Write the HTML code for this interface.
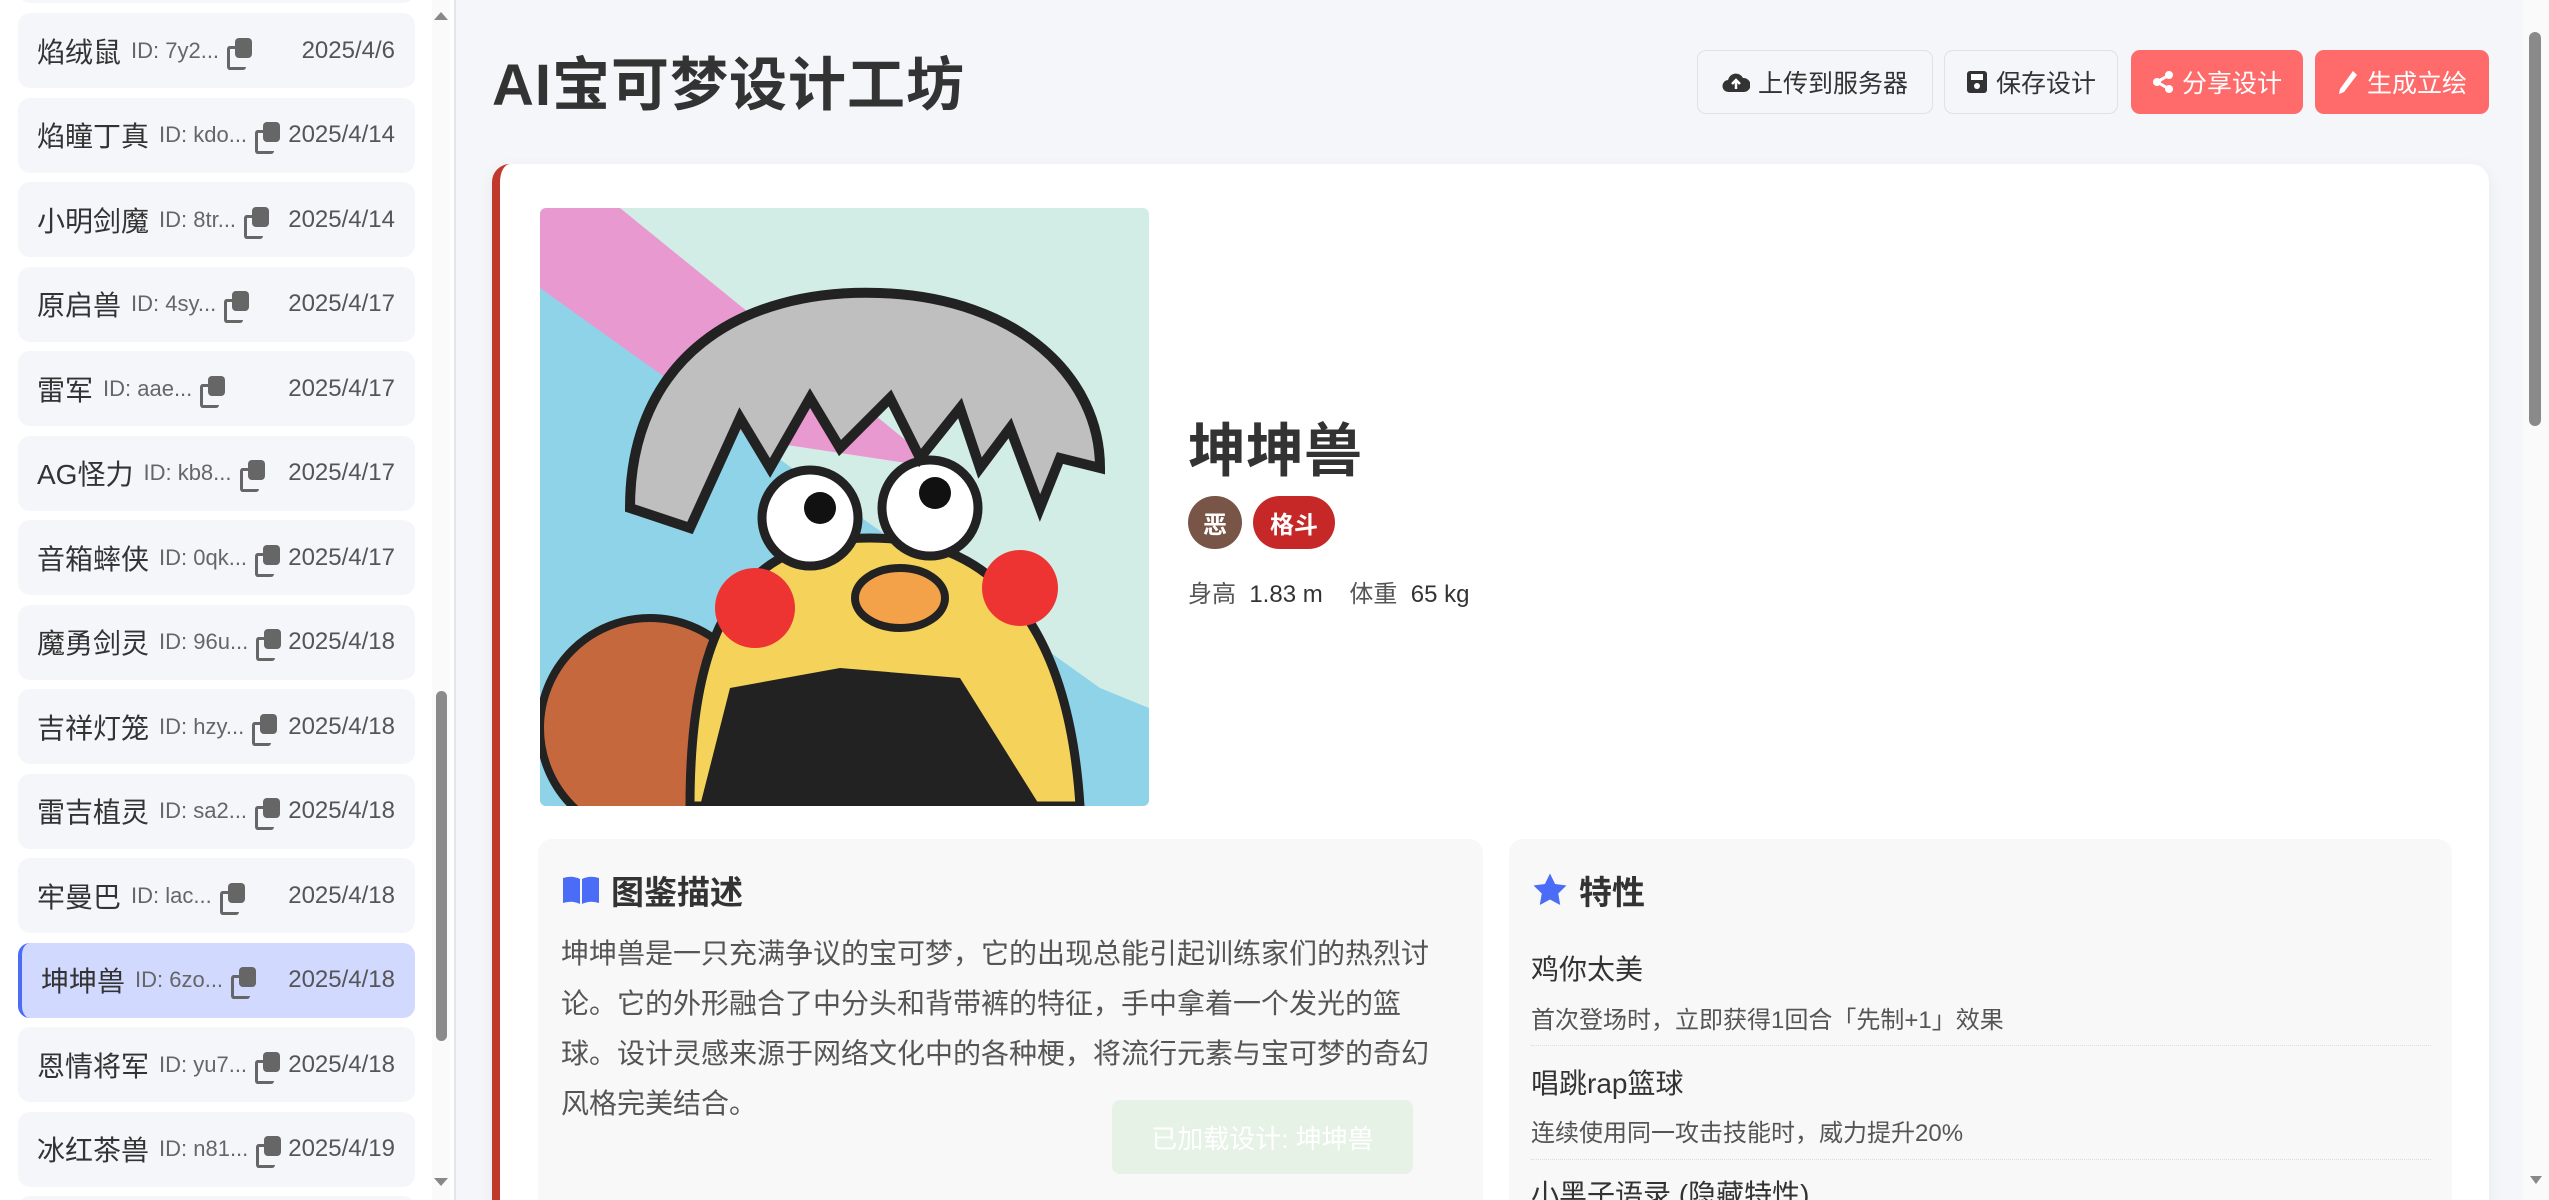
<!DOCTYPE html>
<html style="overflow:hidden;width:2549px;height:1200px"><head><meta charset="utf-8"><style>
*{box-sizing:border-box;margin:0;padding:0}
body{width:2549px;height:1200px;overflow:hidden;background:#f5f6fa;font-family:"Liberation Sans","Noto Sans CJK SC",sans-serif;position:relative;color:#333}
#side{position:absolute;left:0;top:0;width:456px;height:1200px;background:#fff;border-right:2px solid #e4e6ea;overflow:hidden}
.it{position:absolute;left:18px;width:397px;height:75px;background:#f5f6fa;border-radius:12px;display:flex;align-items:center;padding:0 20px 0 19px}
.it .n{font-size:28px;color:#333;white-space:nowrap}
.it .id{font-size:22px;color:#666;margin-left:10px;white-space:nowrap}
.it .cp{display:inline-block;width:26px;height:26px;position:relative;margin-left:8px}
.it .cp:before{content:"";position:absolute;left:0;top:8px;width:16px;height:18px;border:3px solid #666;border-right:none;border-radius:3px}
.it .cp:after{content:"";position:absolute;left:8px;top:0;width:17px;height:20px;background:#666;border-radius:4px}
.it .d{margin-left:auto;font-size:24px;color:#555;white-space:nowrap}
.it.act{background:#d1d9ff;border-left:4px solid #4a6cf7}
#sb{position:absolute;left:432px;top:0;width:18px;height:1200px;background:#fafafa}
#sb .th{position:absolute;left:4px;top:691px;width:11px;height:350px;background:#8a8a8a;border-radius:6px}
h1{position:absolute;left:492px;top:38px;font-size:58px;font-weight:bold;color:#333;letter-spacing:1px}
.btn{position:absolute;top:50px;height:64px;border-radius:9px;display:flex;align-items:center;justify-content:center;font-size:25px;gap:8px}
.bw{background:#f5f6fa;border:1.5px solid #dfe1e6;color:#333}
.br{background:#ff6b6b;color:#fff}
#card{position:absolute;left:492px;top:164px;width:1997px;height:1060px;background:#fff;border-radius:18px;border-left:8px solid #c0392b;box-shadow:0 4px 16px rgba(0,0,0,.06)}
#img{position:absolute;left:540px;top:208px;width:609px;height:598px;border-radius:6px;overflow:hidden}
.nm{position:absolute;left:1188px;top:404px;font-size:58px;font-weight:bold;color:#333}
.bd{position:absolute;top:496px;height:53px;border-radius:27px;color:#fff;font-size:24px;font-weight:bold;display:flex;align-items:center;justify-content:center}
.hw{position:absolute;left:1188px;top:574px;font-size:24px;color:#333}
.box{position:absolute;top:839px;height:400px;background:#f8f8f8;border-radius:14px}
.bt{position:absolute;top:866px;font-size:33px;font-weight:bold;color:#333;display:flex;align-items:center;gap:10px}
.desc{position:absolute;left:561px;top:929px;width:880px;font-size:28px;line-height:50px;color:#555}
.tn{position:absolute;left:1531px;font-size:28px;color:#333}
.td{position:absolute;left:1531px;font-size:24px;color:#555}
.hr{position:absolute;left:1531px;width:900px;border-top:1.5px dotted #ddd}
#toast{position:absolute;left:1112px;top:1100px;width:301px;height:74px;background:rgba(225,240,225,.75);border-radius:8px;color:#fff;font-size:26px;display:flex;align-items:center;justify-content:center}
#rsb{position:absolute;left:2523px;top:0;width:26px;height:1200px;background:#fafafa}
#rsb .th{position:absolute;left:6px;top:32px;width:12px;height:394px;background:#8a8a8a;border-radius:6px}
#clip{position:absolute;left:0;top:0;width:2549px;height:1200px;overflow:hidden}
</style></head><body><div id="clip">
<div id="side">
<div class="it" style="top:-72px"></div>
<div class="it" style="top:13px"><span class="n">焰绒鼠</span><span class="id">ID: 7y2...</span><span class="cp"></span><span class="d">2025/4/6</span></div>
<div class="it" style="top:97.5px"><span class="n">焰瞳丁真</span><span class="id">ID: kdo...</span><span class="cp"></span><span class="d">2025/4/14</span></div>
<div class="it" style="top:182px"><span class="n">小明剑魔</span><span class="id">ID: 8tr...</span><span class="cp"></span><span class="d">2025/4/14</span></div>
<div class="it" style="top:266.5px"><span class="n">原启兽</span><span class="id">ID: 4sy...</span><span class="cp"></span><span class="d">2025/4/17</span></div>
<div class="it" style="top:351px"><span class="n">雷军</span><span class="id">ID: aae...</span><span class="cp"></span><span class="d">2025/4/17</span></div>
<div class="it" style="top:435.5px"><span class="n">AG怪力</span><span class="id">ID: kb8...</span><span class="cp"></span><span class="d">2025/4/17</span></div>
<div class="it" style="top:520px"><span class="n">音箱蟀侠</span><span class="id">ID: 0qk...</span><span class="cp"></span><span class="d">2025/4/17</span></div>
<div class="it" style="top:604.5px"><span class="n">魔勇剑灵</span><span class="id">ID: 96u...</span><span class="cp"></span><span class="d">2025/4/18</span></div>
<div class="it" style="top:689px"><span class="n">吉祥灯笼</span><span class="id">ID: hzy...</span><span class="cp"></span><span class="d">2025/4/18</span></div>
<div class="it" style="top:773.5px"><span class="n">雷吉植灵</span><span class="id">ID: sa2...</span><span class="cp"></span><span class="d">2025/4/18</span></div>
<div class="it" style="top:858px"><span class="n">牢曼巴</span><span class="id">ID: lac...</span><span class="cp"></span><span class="d">2025/4/18</span></div>
<div class="it act" style="top:942.5px"><span class="n">坤坤兽</span><span class="id">ID: 6zo...</span><span class="cp"></span><span class="d">2025/4/18</span></div>
<div class="it" style="top:1027px"><span class="n">恩情将军</span><span class="id">ID: yu7...</span><span class="cp"></span><span class="d">2025/4/18</span></div>
<div class="it" style="top:1111.5px"><span class="n">冰红茶兽</span><span class="id">ID: n81...</span><span class="cp"></span><span class="d">2025/4/19</span></div>
<div class="it" style="top:1196px"></div>
<div id="sb"><svg width="18" height="1200" style="position:absolute;left:0;top:0"><path d="M2 20 L9 12 L16 20Z M2 1178 L9 1186 L16 1178Z" fill="#888"/></svg><div class="th"></div></div>
</div>
<h1>AI宝可梦设计工坊</h1>
<div class="btn bw" style="left:1697px;width:236px"><svg width="28" height="24" viewBox="0 0 28 24"><path d="M7 22a6 6 0 0 1-1-12 8 8 0 0 1 15-2 7 7 0 0 1 1 14z" fill="#333"/><path d="M14 19v-8M10 14l4-4 4 4" stroke="#fff" stroke-width="2.5" fill="none"/></svg>上传到服务器</div>
<div class="btn bw" style="left:1944px;width:174px"><svg width="22" height="24" viewBox="0 0 22 24"><rect x="1" y="1" width="20" height="22" rx="3" fill="#333"/><rect x="5" y="4" width="12" height="6" fill="#fff"/><circle cx="11" cy="16" r="3" fill="#fff"/></svg>保存设计</div>
<div class="btn br" style="left:2131px;width:172px"><svg width="22" height="24" viewBox="0 0 22 24"><circle cx="17" cy="5" r="4" fill="#fff"/><circle cx="5" cy="12" r="4" fill="#fff"/><circle cx="17" cy="19" r="4" fill="#fff"/><path d="M17 5L5 12L17 19" stroke="#fff" stroke-width="3" fill="none"/></svg>分享设计</div>
<div class="btn br" style="left:2315px;width:174px"><svg width="22" height="26" viewBox="0 0 22 26"><path d="M16 2l4 4L7 23l-5 2 1-5z" fill="#fff"/></svg>生成立绘</div>
<div id="card"></div>
<div id="img"><svg width="609" height="598" viewBox="0 0 609 598">
<rect width="609" height="598" fill="#d2ede6"/>
<path d="M0 0L80 0L400 260L0 200Z" fill="#e899cf"/>
<path d="M0 80L560 480L609 500L609 598L0 598Z" fill="#8fd3e8"/>
<circle cx="110" cy="520" r="110" fill="#c6683e" stroke="#222" stroke-width="8"/>
<path d="M150 598C150 420 200 330 330 330C470 330 530 440 540 598Z" fill="#f5d35a" stroke="#222" stroke-width="9"/>
<path d="M160 598L190 480L300 460L420 470L500 598Z" fill="#222"/>
<circle cx="270" cy="310" r="48" fill="#fff" stroke="#222" stroke-width="9"/>
<circle cx="390" cy="300" r="48" fill="#fff" stroke="#222" stroke-width="9"/>
<circle cx="280" cy="300" r="16" fill="#111"/><circle cx="395" cy="285" r="16" fill="#111"/>
<ellipse cx="360" cy="390" rx="45" ry="30" fill="#f4a24a" stroke="#222" stroke-width="8"/>
<circle cx="215" cy="400" r="40" fill="#e33"/><circle cx="480" cy="380" r="38" fill="#e33"/>
<path d="M90 300C90 150 200 80 340 85C480 90 560 170 560 260L520 250L500 300L470 220L440 260L420 200L380 250L350 190L300 240L270 190L230 260L200 210L150 320Z" fill="#bfbfbf" stroke="#222" stroke-width="10"/>
</svg></div>
<div class="nm">坤坤兽</div>
<div class="bd" style="left:1188px;width:54px;background:#795548">恶</div>
<div class="bd" style="left:1253px;width:82px;background:#c62828">格斗</div>
<div class="hw"><span style="color:#555">身高</span>&nbsp;&nbsp;1.83 m&nbsp;&nbsp;&nbsp;&nbsp;<span style="color:#555">体重</span>&nbsp;&nbsp;65 kg</div>
<div class="box" style="left:538px;width:945px"></div>
<div class="box" style="left:1509px;width:943px"></div>
<div class="bt" style="left:561px"><svg width="40" height="32" viewBox="0 0 40 32"><path d="M2 4q9-3 17 1v25q-8-4-17-1z M21 5q8-4 17-1v25q-9-3-17 1z" fill="#4a6cf7"/></svg>图鉴描述</div>
<div class="bt" style="left:1531px"><svg width="38" height="36" viewBox="0 0 24 24"><path d="M12 1l3.4 7 7.6 1-5.5 5.3 1.3 7.7L12 18.3 5.2 22l1.3-7.7L1 9l7.6-1z" fill="#4a6cf7"/></svg>特性</div>
<div class="desc">坤坤兽是一只充满争议的宝可梦，它的出现总能引起训练家们的热烈讨论。它的外形融合了中分头和背带裤的特征，手中拿着一个发光的篮球。设计灵感来源于网络文化中的各种梗，将流行元素与宝可梦的奇幻风格完美结合。</div>
<div class="tn" style="top:948px">鸡你太美</div>
<div class="td" style="top:1000px">首次登场时，立即获得1回合「先制+1」效果</div>
<div class="hr" style="top:1045px"></div>
<div class="tn" style="top:1062px">唱跳rap篮球</div>
<div class="td" style="top:1113px">连续使用同一攻击技能时，威力提升20%</div>
<div class="hr" style="top:1159px"></div>
<div class="tn" style="top:1173px">小黑子语录 (隐藏特性)</div>
<div id="toast">已加载设计: 坤坤兽</div>
<div id="rsb"><div class="th"></div><svg width="26" height="1200" style="position:absolute;left:0;top:0"><path d="M7 1176 L13 1184 L19 1176Z" fill="#888"/></svg></div>
</div></body></html>
